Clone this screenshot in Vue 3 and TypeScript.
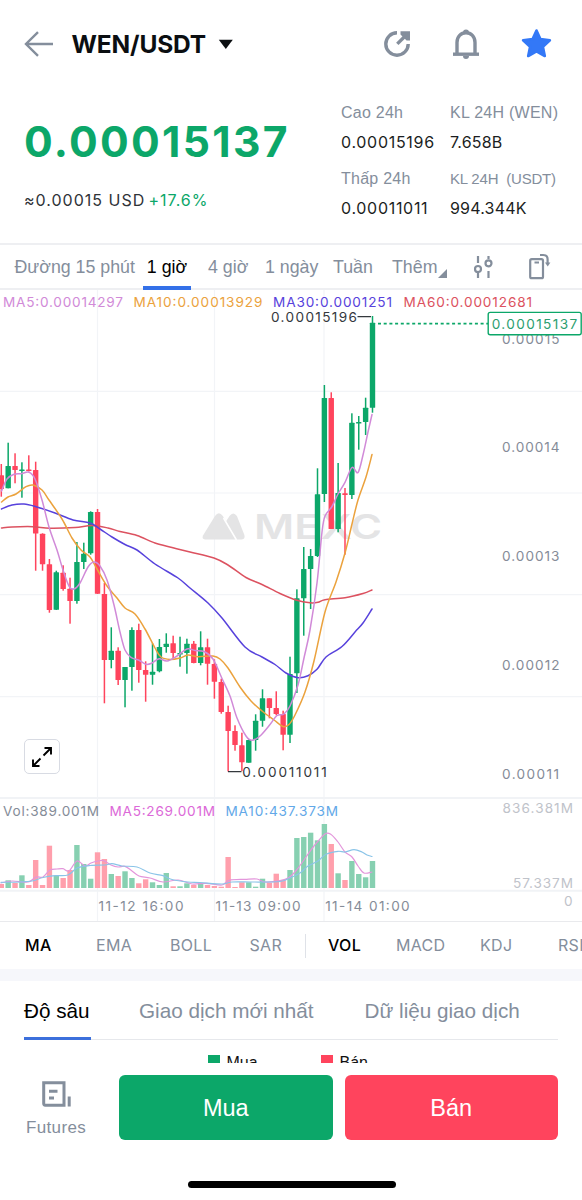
<script setup lang="ts">
type Candle = [dir: 'g' | 'r', high: number, top: number, bottom: number, low: number, volTop: number]
type Point = [x: number, y: number]

const PITCH = 6.874
const VOL_BASE = 888

const candles: Candle[] = [
  ['r', 464, 475.3, 489, 496.7, 884], ['g', 442.7, 466, 488.3, 488.3, 880.3], ['r', 453.3, 466, 470, 483.3, 883],
  ['g', 462.3, 469.4, 471, 497.7, 875.3], ['r', 455.3, 469.4, 471, 471.5, 885], ['r', 461.7, 470, 533.5, 570.7, 860],
  ['r', 533.3, 533.7, 564.3, 570.7, 885], ['r', 559, 564.3, 610, 612.7, 845.7], ['g', 570.7, 572.3, 609.7, 610, 876],
  ['r', 565.3, 572.7, 589, 590.7, 878], ['r', 577.7, 588.7, 601, 623.7, 870], ['g', 542, 562, 601, 603.7, 845],
  ['g', 542.7, 553.7, 562, 569, 864], ['g', 511.3, 512, 553.3, 554.7, 878.7], ['r', 509, 512, 593.7, 594, 852.3],
  ['r', 583, 594, 660, 703.3, 859], ['g', 627.3, 650.7, 660, 668.3, 874], ['r', 647.3, 650.7, 680, 685, 876],
  ['g', 667, 667, 680, 707.3, 871.3], ['g', 627.3, 630, 667, 690.7, 878], ['r', 623.7, 630, 670, 682.7, 883.3],
  ['r', 661.3, 670, 674.7, 701.7, 879.3], ['g', 643.3, 671.7, 674.7, 684.7, 882.3], ['g', 639, 647, 671.3, 672.3, 885],
  ['g', 633.3, 643.7, 647, 652.7, 873], ['r', 635.7, 643.3, 653, 659.3, 886.3], ['g', 636.7, 653, 654.5, 666.7, 886.3],
  ['g', 638.7, 643.7, 653, 673.7, 883.3], ['r', 641, 643.7, 663, 663.3, 885], ['g', 631.3, 647.3, 663, 665.3, 882.7],
  ['r', 638.7, 647.3, 663.7, 684.7, 885], ['r', 659.3, 664, 681.7, 698.7, 886], ['r', 678.7, 682, 712, 713.7, 886.7],
  ['r', 705.7, 712, 731, 771.5, 857], ['r', 725.3, 731, 745, 750.7, 887], ['r', 732.7, 745.3, 762.3, 771, 882.3],
  ['g', 739.3, 740, 762.7, 762.7, 882.3], ['g', 714.3, 720.7, 740, 750.7, 886.7], ['g', 689.3, 698.3, 720.7, 726.7, 878.7],
  ['r', 698.3, 698.3, 708, 718.3, 882.7], ['r', 691.3, 708, 714, 715.3, 873.7], ['r', 710.7, 714, 734.7, 750.3, 880],
  ['g', 656.7, 674, 734.7, 743, 870], ['g', 589.3, 598.3, 673.3, 693, 838], ['g', 547, 569, 598.3, 635.7, 837],
  ['g', 549, 556, 569, 609, 832.7], ['g', 468.3, 494.3, 556, 557, 840.3], ['g', 385, 398, 494, 502, 824],
  ['r', 392.3, 398, 529, 529, 844], ['g', 463, 493, 529, 532.3, 873.3], ['r', 488, 493.3, 495, 554.7, 880],
  ['g', 413.3, 422.7, 495, 499, 861], ['g', 416, 422, 423.4, 449.7, 874], ['g', 397.7, 407.7, 422, 435, 877.3],
  ['g', 316, 322.7, 407.7, 412.7, 861],
]

const bars = candles.map(([dir, high, top, bottom, low, volTop], i) => ({
  dir, high, top, bottom, low, volTop, x: 1.3 + PITCH * i,
}))

/* Rounded path through the given points (Catmull-Rom to cubic Bézier). */
function smooth(p: Point[]): string {
  let d = `M${p[0][0]} ${p[0][1]}`
  for (let i = 0; i < p.length - 1; i++) {
    const a = p[Math.max(0, i - 1)]
    const b = p[i]
    const c = p[i + 1]
    const e = p[Math.min(p.length - 1, i + 2)]
    const c1 = [b[0] + (c[0] - a[0]) / 6, b[1] + (c[1] - a[1]) / 6]
    const c2 = [c[0] - (e[0] - b[0]) / 6, c[1] - (e[1] - b[1]) / 6]
    d += `C${c1.concat(c2).map((n) => n.toFixed(2)).join(' ')} ${c[0]} ${c[1]}`
  }
  return d
}

const curves = [
  {
    cls: 'ma60',
    d: smooth([[1.5, 528], [12, 527], [33, 526.7], [50, 528.3], [75, 527.5], [92, 525.5], [108, 528], [120, 531.5], [137, 535.5], [155, 543], [172, 547.5], [190, 552], [214, 558], [228, 565], [246, 577.5], [262, 584.5], [280, 593.5], [296, 600], [310, 602.8], [318, 602.3], [325, 599.7], [345, 597.7], [363, 593.5], [372, 590]]),
  },
  {
    cls: 'ma30',
    d: smooth([[1.5, 509], [12, 505], [24, 504], [36, 506.7], [55, 513], [73, 520], [90, 523], [100, 529], [112, 537], [125, 544.5], [137, 550], [155, 564], [178, 578], [190, 588], [208, 603], [222, 618], [245, 647], [262, 657], [275, 664.5], [286, 673], [298, 677.7], [308, 675.7], [317, 669.3], [326, 657], [342, 646.5], [355, 632], [363, 623], [372, 609]]),
  },
  {
    cls: 'ma10',
    d: smooth([[1.5, 502], [8, 497], [16, 494], [26, 486.7], [33, 485], [42, 490], [49, 500], [62, 519], [72, 538], [81, 550], [90, 557], [97, 569], [107, 586], [117, 598], [125, 608], [135, 614], [145, 629], [155, 648], [161, 657], [170, 659.5], [180, 658], [188, 655], [198, 656.7], [213, 656], [220, 659], [228, 668], [240, 687], [251, 701], [262, 711], [274, 720], [283, 726.5], [289, 724.5], [295, 715], [305, 692], [314, 661], [325, 612], [336, 582], [345, 553], [352, 524], [358, 500], [366, 477], [372, 454.5]]),
  },
  {
    cls: 'ma5',
    d: smooth([[1.5, 491], [7, 479], [14, 474.3], [21, 473.7], [29, 472.3], [35, 479], [42, 500], [49, 527], [57, 550], [63, 570], [69, 586], [74, 589], [80, 583], [88, 567], [94, 562], [100, 566], [107, 580], [114, 605], [120, 632], [125, 650], [131, 657.3], [139, 660.3], [146, 664.3], [152, 663], [159, 658.7], [167, 661], [177, 656], [187, 649], [195, 650.5], [204, 651.5], [213, 659], [222, 678.5], [230, 696], [237, 718], [246, 736], [252, 740.3], [260, 736], [270, 724.5], [277, 715.5], [284, 714], [290, 706], [298, 685], [304, 658], [310, 630], [317, 583], [322, 532], [325, 516], [332, 506.5], [338, 494], [345, 482.3], [352, 467.5], [358, 472.5], [363, 455], [368, 432], [372, 414.5]]),
  },
]

const volCurves = [
  {
    cls: 'vma5',
    d: smooth([[1, 883], [12, 881], [28, 882], [36, 877], [43, 877], [50, 870], [57, 869], [63, 868.7], [69, 871], [77, 861], [85, 866], [91, 863], [98, 861], [104, 860.7], [111, 865], [118, 867], [125, 866.3], [132, 871], [139, 876], [150, 878], [163, 882], [178, 880], [192, 884], [206, 883.3], [222, 885], [229, 880.3], [245, 879.3], [257, 879], [265, 882], [280, 880.7], [289, 877.5], [297, 869.5], [306, 857], [314, 846], [325, 834], [331, 834.5], [338, 842], [345, 852], [352, 857], [358, 866], [364, 873], [372, 872]]),
  },
  {
    cls: 'vma10',
    d: smooth([[1, 882.3], [20, 882], [32, 881], [43, 877.5], [55, 875.7], [68, 875], [77, 868], [90, 865.5], [105, 865], [112, 863.7], [122, 866], [137, 867], [150, 873], [163, 875.7], [172, 879.5], [188, 882], [200, 882.5], [222, 884], [232, 882], [250, 882], [263, 882], [280, 881.5], [290, 878], [300, 873], [308, 866], [318, 861], [326, 854.3], [338, 851.3], [345, 852], [354, 849.7], [362, 852], [367, 855], [372, 856.5]]),
  },
]

const gridX = [97.5, 214.5, 324]
const gridY = [391.3, 493, 594.7, 696.6]

const labels = [
  { t: 'MA5:0.00014297', x: 3, y: 307, w: 120, c: 'l-ma5' },
  { t: 'MA10:0.00013929', x: 133.5, y: 307, w: 129, c: 'l-ma10' },
  { t: 'MA30:0.0001251', x: 273, y: 307, w: 119, c: 'l-ma30' },
  { t: 'MA60:0.00012681', x: 403.500, y: 307, w: 128.5, c: 'l-ma60' },
  { t: '0.00014', x: 502, y: 452, w: 57.5, c: 'axis' },
  { t: '0.00013', x: 502, y: 561, w: 57.5, c: 'axis' },
  { t: '0.00012', x: 502, y: 670, w: 57.5, c: 'axis' },
  { t: '0.00011', x: 502, y: 779, w: 57, c: 'axis' },
  { t: 'Vol:389.001M', x: 3, y: 816, w: 96, c: 'axis' },
  { t: 'MA5:269.001M', x: 109.5, y: 816, w: 105.5, c: 'l-vma5' },
  { t: 'MA10:437.373M', x: 225.5, y: 816, w: 112.5, c: 'l-vma10' },
  { t: '836.381M', x: 502.5, y: 813, w: 70.5, c: 'faint' },
  { t: '57.337M', x: 513, y: 888, w: 60, c: 'faint' },
  { t: '0', x: 564, y: 905.5, w: 9, c: 'faint' },
  { t: '11-12 16:00', x: 98.5, y: 911.3, w: 85, c: 'axis' },
  { t: '11-13 09:00', x: 215.5, y: 911.3, w: 85, c: 'axis' },
  { t: '11-14 01:00', x: 325.2, y: 911.3, w: 84.5, c: 'axis' },
]
</script>

<template>
  <div class="screen">
    <header class="topbar">
      <svg class="back" width="30" height="26" viewBox="0 0 30 26"><path d="M29 13H2M14 1.2L2 13l12 11.8" /></svg>
      <h1 class="pair">WEN/USDT</h1>
      <svg class="caret" width="16" height="11" viewBox="0 0 16 11"><path d="M0.800 0.800h14L7.800 10z" /></svg>
      <div class="tools">
        <svg width="30" height="30" viewBox="0 0 30 30" class="share">
          <path class="ring" d="M15 3.8A11.2 11.2 0 1 0 26.2 15" />
          <path class="shaft" d="M15.3 14.9L25 5.2" />
          <path class="head" d="M18.5 2.2H28v9.3h-3.4L18.5 5.6z" />
        </svg>
        <svg width="30" height="32" viewBox="0 0 30 32" class="bell">
          <path d="M6 26V14.5C6 8.6 10 4.8 15 4.8s9 3.8 9 9.7V26" />
          <path d="M2 26.2h26" />
          <path class="fill" d="M12 4.6a3 3 0 0 1 6 0zM12 28h6a3 3 0 0 1-6 0z" />
        </svg>
        <svg width="32" height="32" viewBox="0 0 32 32" class="star">
          <path d="M16.500 2.500l3.900 8.600 9.500 1.100-7 6.500 1.900 9.300-8.300-4.600L8.200 28l1.900-9.300-7-6.500 9.500-1.100z" />
        </svg>
      </div>
    </header>

    <section class="quote">
      <div class="last">
        <div class="price">0.00015137</div>
        <div class="sub"><span class="usd">≈0.00015 USD</span><span class="chg">+17.6%</span></div>
      </div>
      <dl class="stats">
        <div><dt>Cao 24h</dt><dd>0.00015196</dd></div>
        <div><dt class="wen">KL 24H (WEN)</dt><dd class="vol24">7.658B</dd></div>
        <div><dt>Thấp 24h</dt><dd>0.00011011</dd></div>
        <div><dt class="small">KL 24H&nbsp; (USDT)</dt><dd class="vol24">994.344K</dd></div>
      </dl>
    </section>

    <nav class="periods">
      <span class="p1">Đường 15 phút</span>
      <span class="p2 on">1 giờ</span>
      <span class="p3">4 giờ</span>
      <span class="p4">1 ngày</span>
      <span class="p5">Tuần</span>
      <span class="p6">Thêm<svg width="9" height="9" viewBox="0 0 9 9"><path d="M9 0v9H0z" /></svg></span>
      <svg class="sliders" width="20" height="26" viewBox="0 0 20 26">
        <path d="M4 2v7M4 15.500M4 17v7M14.500 2v3M14.500 12.500M14.500 17v7" />
        <circle cx="4" cy="15" r="3" /><circle cx="14.500" cy="9.300" r="3" />
      </svg>
      <svg class="rotate" width="24" height="28" viewBox="0 0 24 28">
        <rect x="2.2" y="6.2" width="12.8" height="19" rx="1.5" />
        <path d="M6.5 9.500h4.500M12 2h3.200c2.800 0 4.400 1.700 4.400 4.300V11" />
        <path class="tip" d="M17 9.400h5.400l-2.700 4z" />
      </svg>
    </nav>

    <div class="chart">
      <svg width="582" height="631" viewBox="0 290 582 631">
        <g class="grid">
          <path v-for="x in gridX" :key="x" :d="`M${x} 290V921`" />
          <path v-for="y in gridY" :key="y" :d="`M0 ${y}H582`" />
          <path class="strong" d="M0 798H582M0 890.8H582" />
        </g>
        <g class="mark">
          <path d="M203 535.500L215 516q3.800-5.500 7.800 0L236.500 539.500H205q-3.500-.6-2-4z" />
          <path d="M226 521.500l3.500-5.500q3.800-5 7.400 0L244.400 535q1 4-2.600 4.500h-5.300z" />
          <path class="cut" d="M223.500 518L236.500 540" />
          <text x="254" y="539" textLength="128" lengthAdjust="spacingAndGlyphs">MEXC</text>
        </g>
        <g v-for="b in bars" :key="b.x" :class="b.dir">
          <rect class="vol" :x="b.x - 2.7" :y="b.volTop" width="5.4" :height="VOL_BASE - b.volTop" />
          <rect :x="b.x - 0.75" :y="b.high" width="1.5" :height="b.low - b.high" />
          <rect :x="b.x - 2.7" :y="b.top" width="5.4" :height="b.bottom - b.top" rx="0.5" />
        </g>
        <path v-for="c in curves" :key="c.cls" class="line" :class="c.cls" :d="c.d" />
        <path v-for="c in volCurves" :key="c.cls" class="line thin" :class="c.cls" :d="c.d" />
        <text v-for="l in labels" :key="l.t" class="label" :class="l.c" :x="l.x" :y="l.y" :textLength="l.w">{{ l.t }}</text>
        <text class="label axis" x="502" y="343.5" textLength="57.5">0.00015</text>
        <path class="lead" d="M357.5 316.7H371M228 771.7H241.5" />
        <text class="label ink" x="271" y="322" textLength="86">0.00015196</text>
        <text class="label ink" x="242.2" y="777" textLength="84.5">0.00011011</text>
        <path class="dash" d="M378 323.6H488" />
        <rect class="tag" x="488.2" y="312.4" width="93" height="22.4" rx="2" />
        <text class="label tagtext" x="491.7" y="329.2" textLength="85.5">0.00015137</text>
      </svg>
      <button class="expand">
        <svg width="24" height="24" viewBox="0 0 24 24"><path d="M13.5 10.500L20.500 3.500M14.500 3H21V9.500M10.500 13.500L3.500 20.500M3 14.500V21H9.500" /></svg>
      </button>
    </div>

    <nav class="indicators">
      <span class="i1 on">MA</span><span class="i2">EMA</span><span class="i3">BOLL</span><span class="i4">SAR</span>
      <i class="sep"></i>
      <span class="i5 on">VOL</span><span class="i6">MACD</span><span class="i7">KDJ</span><span class="i8">RSI</span>
    </nav>
    <div class="band"></div>

    <section class="depth">
      <nav class="dtabs">
        <span class="d1 on">Độ sâu</span><span class="d2">Giao dịch mới nhất</span><span class="d3">Dữ liệu giao dịch</span>
      </nav>
      <div class="legend">
        <span class="buy"><i></i>Mua</span><span class="sell"><i></i>Bán</span>
      </div>
    </section>

    <footer class="actions">
      <div class="futures">
        <svg width="30" height="28" viewBox="0 0 30 28">
          <path class="box" d="M24.500 25.200H4.300q-1.600 0-1.600-1.600V2.800h20.300V25" />
          <path class="rows" d="M8 11.200h8.500M8 18h5M28.200 16.500v10" />
        </svg>
        <span>Futures</span>
      </div>
      <button class="btn green">Mua</button>
      <button class="btn red">Bán</button>
    </footer>
    <div class="home"></div>
  </div>
</template>

<style>
body { margin: 0; background: #fff; }
</style>

<style scoped>
.screen {
  width: 582px;
  height: 1200px;
  overflow: hidden;
  display: flex;
  flex-direction: column;
  background: #fff;
  font-family: "Liberation Sans", Arial, sans-serif;
  color: #848e9c;
}
.screen > * { flex-shrink: 0; }
svg { display: block; fill: none; }
span, dt, dd { white-space: nowrap; }
button { font-family: inherit; padding: 0; }

.topbar { display: flex; align-items: center; height: 88px; padding-left: 24px; box-sizing: border-box; }
.back { stroke: #848e9c; stroke-width: 2.4px; }
.pair {
  margin: 0 0 0 17.500px; width: 146.500px;
  font: 700 24.500px/30px Inter, sans-serif; color: #0b0e11; letter-spacing: -0.15px;
}
.caret path { fill: #0b0e11; }
.tools { display: flex; align-items: center; margin-left: 148px; gap: 39px; }
.share .ring, .share .shaft { stroke: #848e9c; stroke-width: 3.4px; }
.share .head { fill: #848e9c; }
.bell { stroke: #848e9c; stroke-width: 3.4px; }
.bell .fill { fill: #848e9c; stroke: none; }
.star path { fill: #3378f7; stroke: #3378f7; stroke-width: 2.6px; stroke-linejoin: round; }

.quote { display: flex; height: 157px; border-bottom: 2px solid #eeeff2; box-sizing: border-box; }
.last { width: 317px; padding-left: 24px; box-sizing: border-box; }
.stats, .price { box-sizing: border-box; }
.price { margin-top: 28px; font: 700 42.600px/52px Inter, sans-serif; color: #0ca769; letter-spacing: 2.300px; }
.sub { display: flex; gap: 4px; margin-top: 22px; font: 400 16px/20px Inter, sans-serif; }
.usd { color: #2f3338; letter-spacing: 1px; width: 120.500px; }
.chg { color: #0ca769; letter-spacing: 1px; }
.stats { margin: 15px 0 0 24px; display: grid; grid-template-columns: 109px 120px; grid-auto-rows: 65.500px; align-content: start; }
.stats dt { font-size: 16px; line-height: 20px; letter-spacing: 0.25px; }
.stats dt.small { font-size: 15px; line-height: 19px; padding-bottom: 1px; letter-spacing: -0.2px; }
.stats dd { margin: 9px 0 0; font: 400 16px/20px Inter, sans-serif; letter-spacing: 0.7px; color: #1b1e22; }
.stats dd.vol24 { letter-spacing: 0.2px; }

.periods { display: flex; align-items: flex-start; height: 45px; border-bottom: 2px solid #eeeff2; box-sizing: border-box; padding-left: 14.500px; font-size: 17.800px; line-height: 44px; }
.periods span { display: block; height: 45px; box-sizing: border-box; }
.p1 { width: 128.500px; }
.p2 { width: 48px; text-align: center; border-bottom: 4px solid #3370e8; }
.on { color: #000; }
.p3 { margin-left: 17px; width: 57px; }
.p4 { width: 68px; }
.p5 { width: 59px; }
.periods .p6 { width: 82px; display: flex; }
.p6 svg { margin: 24px 0 0 1px; }
.p6 path { fill: #848e9c; }
.sliders { margin-top: 9px; stroke: #848e9c; stroke-width: 2.200px; }
.rotate { margin: 8px 0 0 33.500px; stroke: #848e9c; stroke-width: 2.200px; }
.rotate .tip { fill: #848e9c; stroke: none; }

.chart { position: relative; height: 632px; border-bottom: 1.500px solid #e9eaed; box-sizing: border-box; }
.grid { stroke: #f2f4f7; stroke-width: 1.200px; }
.grid .strong { stroke: #f1f3f6; stroke-width: 2px; }
.mark { fill: #e4e4e5; }
.mark .cut { stroke: #fff; stroke-width: 1.500px; }
.mark text { font: 600 34px Inter, sans-serif; }
.g { fill: #0ca769; }
.r { fill: #ff445d; }
.g .vol { fill: #87d0b1; }
.r .vol { fill: #ff9fac; }
.line { stroke-width: 1.500px; stroke-linecap: round; }
.thin { stroke-width: 1.200px; }
.ma5 { stroke: #d18ad8; }
.ma10 { stroke: #eba23d; }
.ma30 { stroke: #5742dc; }
.ma60 { stroke: #dc5260; }
.vma5 { stroke: #e396db; }
.vma10 { stroke: #8ac4e8; }
.label { font: 400 13.600px Inter, sans-serif; }
.l-ma5 { fill: #d18ad8; }
.l-ma10 { fill: #eba23d; }
.l-ma30 { fill: #5742dc; }
.l-ma60 { fill: #dc5260; }
.l-vma5 { fill: #dc69d8; }
.l-vma10 { fill: #62a8e8; }
.axis { fill: #858c98; }
.faint { fill: #bfc3ca; }
.ink { fill: #34383d; }
.lead { stroke: #34383d; stroke-width: 1.300px; }
.dash { stroke: #0ca769; stroke-width: 1.600px; stroke-dasharray: 3 2.700; }
.tag { fill: #fff; stroke: #0ca769; stroke-width: 1.400px; }
.tagtext { fill: #2c9e70; }
.expand {
  position: absolute; left: 24px; top: 449px; width: 36px; height: 35px;
  display: grid; place-items: center; background: #fff; border: 1.500px solid #d8dbe3; border-radius: 5px;
}
.expand svg { stroke: #000; stroke-width: 1.900px; }

.indicators { display: flex; align-items: center; height: 47px; font: 400 16px/47px Inter, sans-serif; padding-left: 25px; box-sizing: border-box; letter-spacing: 0.3px; }
.indicators .on { font-weight: 500; }
.i1 { width: 71px; } .i2 { width: 74px; } .i3 { width: 79.500px; } .i4 { width: 55.500px; }
.sep { width: 1px; height: 24px; background: #dfe2e8; margin-right: 22px; }
.i5 { width: 68px; } .i6 { width: 84px; } .i7 { width: 78px; } .i8 { width: 24px; }
.band { height: 12px; background: #f6f7fb; }

.depth { height: 82px; overflow: hidden; }
.dtabs { display: flex; margin: 0 24px; height: 59px; box-sizing: border-box; border-bottom: 1px solid #e6e8ec; font-size: 20.700px; line-height: 60px; }
.dtabs span { height: 59px; box-sizing: border-box; }
.d1 { width: 67px; border-bottom: 3px solid #3c70dc; margin-right: 48px; }
.d2 { width: 225.500px; }
.legend { display: flex; margin: 12px 0 0 208px; font-size: 16px; line-height: 21px; color: #111; }
.legend span { display: flex; align-items: center; gap: 6.500px; }
.legend i { width: 12px; height: 12px; align-self: flex-start; margin-top: 3px; background: #0ca769; }
.buy { width: 113px; }
.legend .sell i { background: #ff445d; }

.actions { display: flex; gap: 12px; margin: 12px 24px 0 26px; height: 65px; }
.futures { width: 81px; display: flex; flex-direction: column; padding-top: 5px; font-size: 17px; letter-spacing: 0.35px; }
.futures svg { margin-left: 15px; }
.futures span { margin-top: 10px; line-height: 20px; }
.futures .box, .futures .rows { stroke: #848e9c; stroke-width: 3px; }
.btn { width: 213.500px; border: 0; border-radius: 6px; color: #fff; font-size: 23.500px; line-height: 66px; }
.green { background: #0ca769; }
.red { background: #ff445d; }
.home { width: 208px; height: 7.500px; border-radius: 4px; background: #000; margin: 40.500px 0 0 187.500px; }
</style>
